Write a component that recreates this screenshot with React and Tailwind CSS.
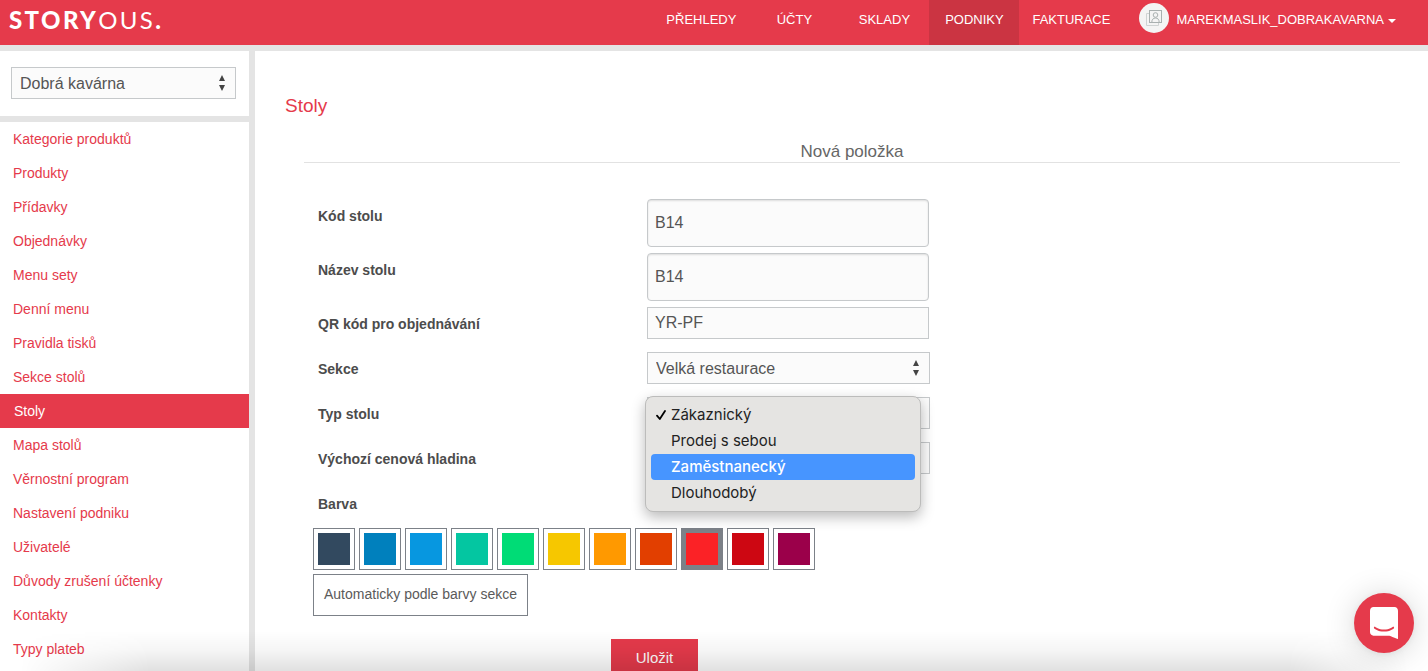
import React from "react";

const NAV = ["PŘEHLEDY", "ÚČTY", "SKLADY", "PODNIKY", "FAKTURACE"];

const MENU = [
  "Kategorie produktů",
  "Produkty",
  "Přídavky",
  "Objednávky",
  "Menu sety",
  "Denní menu",
  "Pravidla tisků",
  "Sekce stolů",
  "Stoly",
  "Mapa stolů",
  "Věrnostní program",
  "Nastavení podniku",
  "Uživatelé",
  "Důvody zrušení účtenky",
  "Kontakty",
  "Typy plateb",
];

const COLORS = [
  { name: "Tmavě modrá", fill: "bg-[#32495f]" },
  { name: "Modrá", fill: "bg-[#0080bd]" },
  { name: "Světle modrá", fill: "bg-[#0797e0]" },
  { name: "Tyrkysová", fill: "bg-[#04c6a1]" },
  { name: "Zelená", fill: "bg-[#00dc76]" },
  { name: "Žlutá", fill: "bg-[#f6c700]" },
  { name: "Oranžová", fill: "bg-[#ff9900]" },
  { name: "Tmavě oranžová", fill: "bg-[#e23f00]" },
  { name: "Červená", fill: "bg-[#fb2226]", selected: true },
  { name: "Tmavě červená", fill: "bg-[#cd0712]" },
  { name: "Vínová", fill: "bg-[#9b004a]" },
];

const TABLE_TYPES = ["Zákaznický", "Prodej s sebou", "Zaměstnanecký", "Dlouhodobý"];

function Arrows() {
  return (
    <svg viewBox="0 0 6 16" className="pointer-events-none absolute top-2 right-[11px] h-4 w-1.5 fill-[#444]" aria-hidden="true">
      <path d="M3 0 6 6H0Z M3 16 0 10H6Z" />
    </svg>
  );
}

function Select({ id, label, options }) {
  return (
    <div className="relative">
      <select
        id={id}
        aria-label={label}
        className="block h-8 w-full appearance-none border border-[#c6c9cb] bg-[#fbfbfb] pt-0.5 pr-6 pl-2 text-base text-[#555]"
      >
        {options.map((o) => (
          <option key={o}>{o}</option>
        ))}
      </select>
      <Arrows />
    </div>
  );
}

function Row({ id, label, height, children }) {
  return (
    <div className={`grid grid-cols-[329px_minmax(0,283px)] items-start ${height}`}>
      <label htmlFor={id} className="pt-[7px] text-sm leading-5 font-bold">
        {label}
      </label>
      {children}
    </div>
  );
}

const tallInput =
  "h-12 w-[282px] rounded border border-[#c6c9cb] bg-[#fbfbfb] px-[7px] text-base text-[#555] shadow-[inset_0_1px_2px_rgba(0,0,0,0.12)]";

function TypeMenu() {
  return (
    <ul
      role="listbox"
      aria-label="Typ stolu"
      className="absolute -top-px -left-0.5 z-10 w-[276px] rounded-lg border border-[#bcbcbb] bg-[#e5e4e2] p-[5px] font-['Inter',sans-serif] text-[15px] text-[#222] shadow-[0_5px_14px_rgba(0,0,0,0.28)]"
    >
      {TABLE_TYPES.map((t, i) => (
        <li
          key={t}
          role="option"
          aria-selected={i === 0}
          className={
            i === 2
              ? "flex h-[26px] items-center rounded bg-[#4795ff] font-medium text-white"
              : "flex h-[26px] items-center"
          }
        >
          <span className="flex w-5 justify-center">
            {i === 0 && (
              <svg viewBox="0 0 10 10" className="h-2.5 w-2.5 fill-none stroke-black stroke-[1.8]" aria-hidden="true">
                <path d="M1 5.6 3.8 9 9 1" strokeLinecap="round" strokeLinejoin="round" />
              </svg>
            )}
          </span>
          {t}
        </li>
      ))}
    </ul>
  );
}

function Header() {
  return (
    <header className="flex h-[45px] shrink-0 items-start justify-between bg-[#e53a4b] text-white">
      <a href="#" className="pt-1 pl-[9px] font-['Lato',sans-serif] text-2xl leading-8 tracking-widest">
        <span className="font-black">STORY</span>
        <span className="font-normal">OUS</span>
        <span className="font-black">.</span>
      </a>
      <div className="flex h-full pr-8 text-[13px] leading-5">
        <nav className="flex">
          {NAV.map((n) => (
            <a
              key={n}
              href="#"
              className={
                n === "PODNIKY"
                  ? "min-w-[90px] bg-[#cb3442] px-[13px] pt-[10px] text-center"
                  : "min-w-[90px] px-[13px] pt-[10px] text-center"
              }
            >
              {n}
            </a>
          ))}
        </nav>
        <button type="button" className="ml-4 flex h-10 items-start">
          <span className="mt-[3px] flex size-[30px] items-center justify-center rounded-full bg-[#f4f4f4]">
            <svg viewBox="0 0 16 16" className="size-4 fill-none stroke-[#a9b0b0]" aria-hidden="true">
              <rect x="3.5" y="0.5" width="12" height="12" />
              <path d="M3 3.5H0.5v12h12V13" stroke="#cfd3d3" />
              <circle cx="9.5" cy="5" r="2.3" />
              <path d="M5.8 12.5c0-3 1.4-4.5 3.7-4.5s3.7 1.500 3.7 4.500" />
            </svg>
          </span>
          <span className="mt-[10px] ml-[7px]">MAREKMASLIK_DOBRAKAVARNA</span>
          <svg viewBox="0 0 8 4" className="mt-[19px] ml-1 h-1 w-2 fill-white" aria-hidden="true">
            <path d="M0 0h8L4 4Z" />
          </svg>
        </button>
      </div>
    </header>
  );
}

export default function App() {
  return (
    <div className="relative flex h-screen flex-col overflow-hidden bg-[#e4e4e4] font-['Liberation_Sans',Arial,sans-serif] text-[#4c4c4c]">
      <Header />
      <div className="flex min-h-0 flex-1 gap-1.5 pt-1.5">
        <aside className="flex w-[249px] shrink-0 flex-col gap-1.5">
          <div className="h-[65px] shrink-0 bg-white pt-4 pr-[13px] pl-[11px]">
            <Select id="podnik" label="Podnik" options={["Dobrá kavárna"]} />
          </div>
          <nav className="flex-1 bg-white">
            {MENU.map((m) => (
              <a
                key={m}
                href="#"
                className={
                  m === "Stoly"
                    ? "block bg-[#e53a4b] pl-[14px] text-sm leading-[34px] text-white"
                    : "block pl-[13px] text-sm leading-[34px] text-[#e53a4b]"
                }
              >
                {m}
              </a>
            ))}
          </nav>
        </aside>

        <main className="min-w-0 flex-1 bg-white pt-[41px] pr-7 pl-[30px]">
          <h1 className="text-[19px] leading-7 text-[#e53a4b]">Stoly</h1>
          <form className="ml-[19px]" onSubmit={(e) => e.preventDefault()}>
            <h2 className="mt-[19px] border-b border-[#e2e2e2] pt-0.5 text-center text-[17px] leading-[21px] text-[#666]">
              Nová položka
            </h2>
            <div className="mt-9 pl-[14px]">
              <Row id="kod" label="Kód stolu" height="h-[54px]">
                <input id="kod" defaultValue="B14" className={tallInput} />
              </Row>
              <Row id="nazev" label="Název stolu" height="h-[54px]">
                <input id="nazev" defaultValue="B14" className={tallInput} />
              </Row>
              <Row id="qr" label="QR kód pro objednávání" height="h-[45px]">
                <input
                  id="qr"
                  defaultValue="YR-PF"
                  className="h-8 w-[282px] border border-[#c6c9cb] bg-[#fbfbfb] px-[7px] text-base text-[#555]"
                />
              </Row>
              <Row id="sekce" label="Sekce" height="h-[45px]">
                <Select id="sekce" options={["Velká restaurace"]} />
              </Row>
              <Row id="typ" label="Typ stolu" height="h-[45px]">
                <div className="relative">
                  <select
                    id="typ"
                    className="block h-8 w-full appearance-none border border-[#c6c9cb] bg-[#fbfbfb] pl-2 text-base text-[#555]"
                  >
                    {TABLE_TYPES.map((t) => (
                      <option key={t}>{t}</option>
                    ))}
                  </select>
                  <TypeMenu />
                </div>
              </Row>
              <Row id="hladina" label="Výchozí cenová hladina" height="h-[45px]">
                <select
                  id="hladina"
                  className="block h-8 w-full appearance-none border border-[#c6c9cb] bg-[#fbfbfb] pl-2 text-base text-[#555]"
                />
              </Row>
            </div>
            <fieldset className="pl-[9px]">
              <legend className="h-[41px] pt-[7px] pl-[5px] text-sm leading-5 font-bold">Barva</legend>
              <div className="flex flex-wrap gap-1">
                {COLORS.map((c) => (
                  <button
                    key={c.name}
                    type="button"
                    aria-label={c.name}
                    aria-pressed={!!c.selected}
                    className={
                      c.selected
                        ? "size-[42px] border border-[#7c8188] bg-[#7c8188] p-1"
                        : "size-[42px] border border-[#7c8188] bg-white p-1"
                    }
                  >
                    <span className={`block size-8 ${c.fill}`} />
                  </button>
                ))}
              </div>
              <button
                type="button"
                className="mt-1 h-[42px] border border-[#7c8188] bg-white px-[10px] pb-0.5 text-sm text-[#5a5a5a]"
              >
                Automaticky podle barvy sekce
              </button>
            </fieldset>
            <button
              type="submit"
              className="mt-[23px] ml-[307px] block h-[38px] w-[87px] bg-[#e53a4b] text-[15px] text-white"
            >
              Uložit
            </button>
          </form>
        </main>
      </div>

      <div className="pointer-events-none absolute inset-x-0 bottom-0 h-10 bg-linear-to-t from-black/12 via-black/4 to-transparent [mask-image:linear-gradient(90deg,transparent_20px,black_150px,black_calc(100%_-_140px),transparent_calc(100%_-_20px))]" />

      <button
        type="button"
        aria-label="Otevřít chat"
        className="absolute right-[14px] bottom-[18px] flex size-[60px] items-center justify-center rounded-full bg-[#e53a4b] shadow-[0_1px_6px_rgba(0,0,0,0.06),0_2px_32px_rgba(0,0,0,0.16)]"
      >
        <svg viewBox="0 0 28 32" className="h-8 w-7 fill-white" aria-hidden="true">
          <path d="M28 32s-4.714-1.855-8.527-3.340H3.437C1.540 28.660 0 27.026 0 25.013V3.644C0 1.633 1.540 0 3.437 0h21.125c1.898 0 3.437 1.632 3.437 3.645v18.404H28V32zm-4.139-11.982a.880.880 0 0 0-1.292-.105c-.030.026-3.015 2.681-8.570 2.681-5.486 0-8.517-2.636-8.571-2.684a.880.880 0 0 0-1.290.107 1.010 1.010 0 0 0-.219.708.992.992 0 0 0 .318.664c.142.128 3.537 3.150 9.762 3.150 6.226 0 9.621-3.022 9.763-3.150a.992.992 0 0 0 .317-.664 1.010 1.010 0 0 0-.218-.707z" />
        </svg>
      </button>
    </div>
  );
}
